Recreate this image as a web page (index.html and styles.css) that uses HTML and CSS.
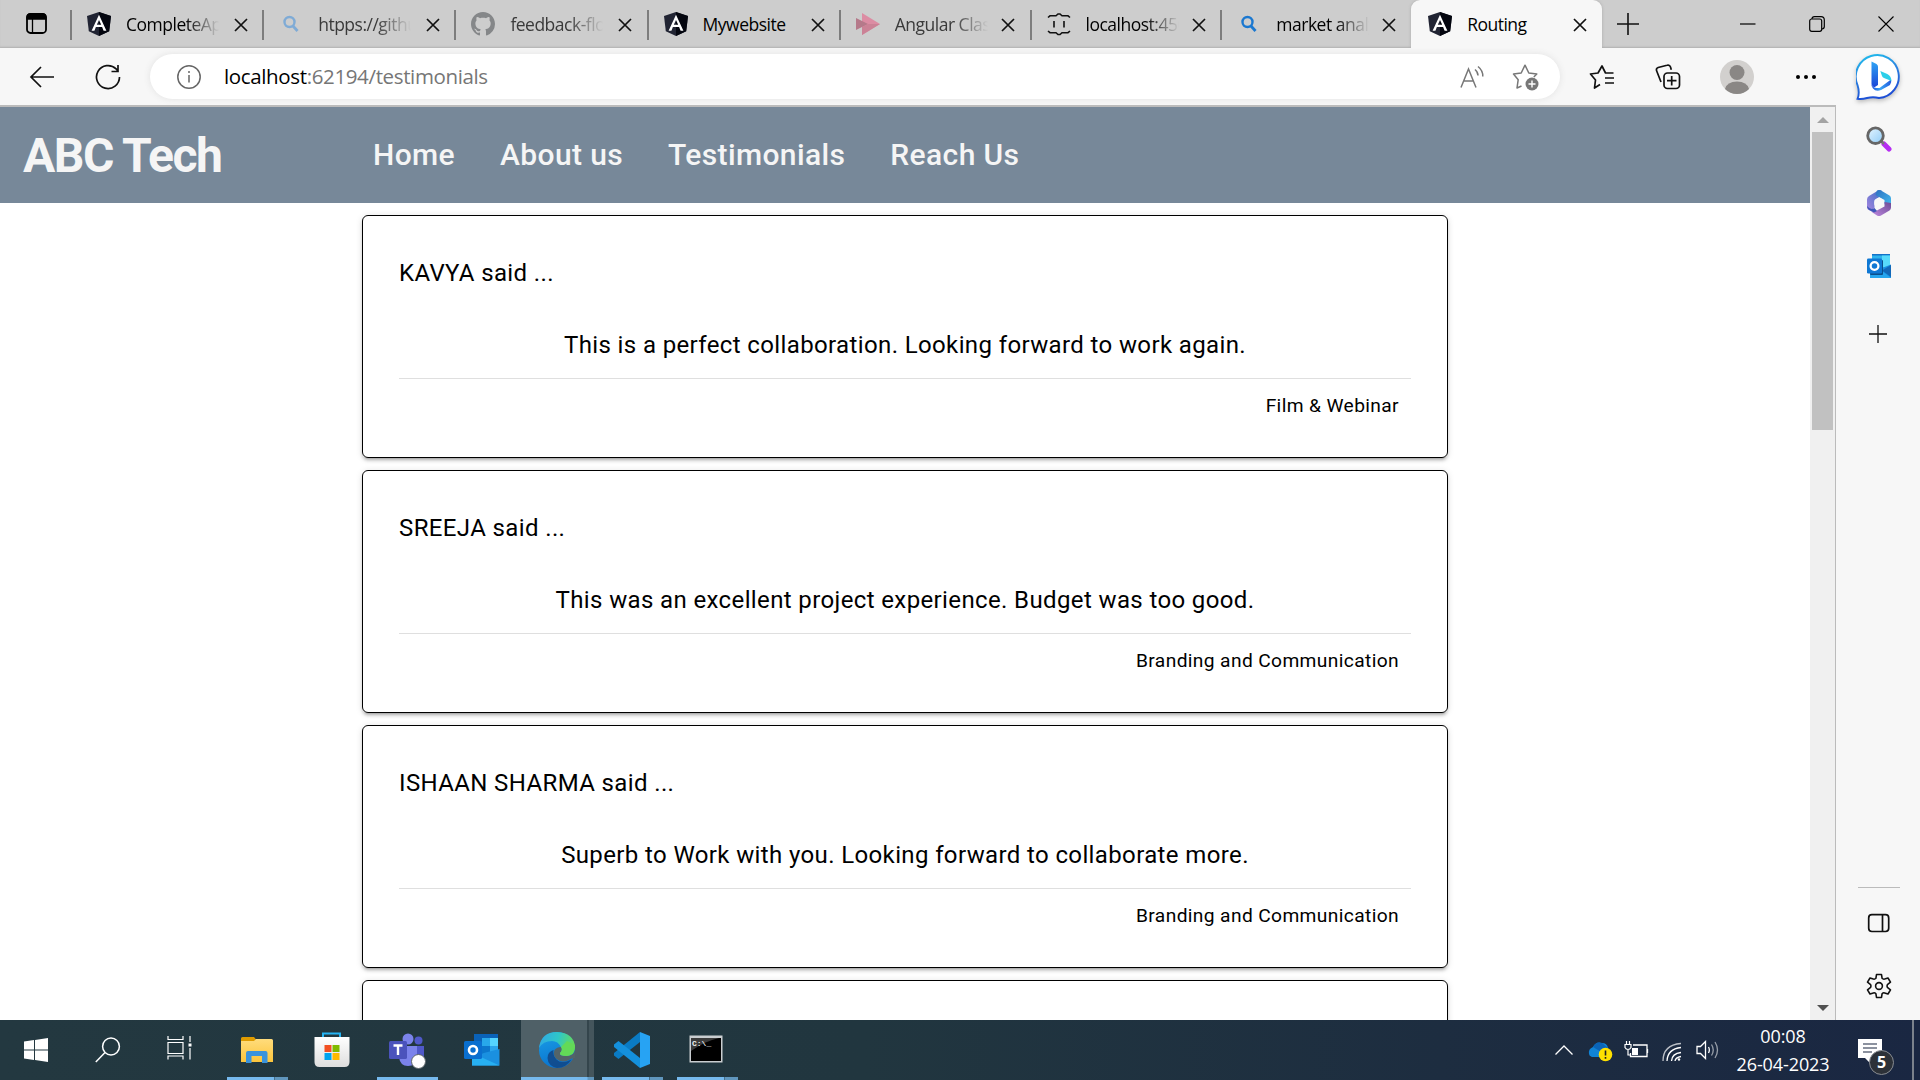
FILE: index.html
```html
<!DOCTYPE html>
<html lang="en">
<head>
<meta charset="utf-8">
<title>Routing</title>
<link rel="stylesheet" href="styles.css">
</head>
<body>
<svg class="defs" aria-hidden="true">
  <defs>
    <linearGradient id="gBingRing" x1="0" y1="0" x2="0.3" y2="1"><stop offset="0" stop-color="#1fc3ee"/><stop offset="0.5" stop-color="#2b83e0"/><stop offset="1" stop-color="#1d4fd6"/></linearGradient>
    <linearGradient id="gBingB" x1="0" y1="0" x2="0" y2="1"><stop offset="0" stop-color="#2fa4f4"/><stop offset="1" stop-color="#1a45d8"/></linearGradient>
    <linearGradient id="gBingTail" x1="0" y1="0" x2="1" y2="0"><stop offset="0" stop-color="#1d50dc"/><stop offset="0.45" stop-color="#39a5f6"/><stop offset="1" stop-color="#2458dc"/></linearGradient>
    <linearGradient id="gEdgeTop" x1="0" y1="0.3" x2="1" y2="0.5"><stop offset="0" stop-color="#2fa9e4"/><stop offset="0.5" stop-color="#2fc6c8"/><stop offset="1" stop-color="#68dc52"/></linearGradient>
    <linearGradient id="gEdgeMid" x1="0" y1="0" x2="0.3" y2="1"><stop offset="0" stop-color="#1ba0e8"/><stop offset="1" stop-color="#0a74cf"/></linearGradient>
    <linearGradient id="gStore" x1="0" y1="0" x2="0" y2="1"><stop offset="0" stop-color="#ffffff"/><stop offset="1" stop-color="#dedede"/></linearGradient>
    <linearGradient id="gFolder" x1="0" y1="0" x2="0" y2="1"><stop offset="0" stop-color="#ffdc7c"/><stop offset="1" stop-color="#fcc53c"/></linearGradient>
    <linearGradient id="gLens" x1="0" y1="0" x2="1" y2="1"><stop offset="0" stop-color="#e6f6ff"/><stop offset="1" stop-color="#8ecbf7"/></linearGradient>
    <linearGradient id="gLoopA" x1="0" y1="1" x2="1" y2="0"><stop offset="0" stop-color="#a585e0"/><stop offset="1" stop-color="#3b6fc4"/></linearGradient>
    <linearGradient id="gLoopB" x1="0" y1="0" x2="1" y2="1"><stop offset="0" stop-color="#2d6fc0"/><stop offset="1" stop-color="#44c0f2"/></linearGradient>
    <linearGradient id="gLoopC" x1="0" y1="1" x2="1" y2="0"><stop offset="0" stop-color="#c08ae0"/><stop offset="1" stop-color="#6c4a96"/></linearGradient>
  </defs>
  <symbol id="angular" viewBox="0 0 24 24">
    <path d="M12 0 24 4 22.2 19.200 12 24 1.800 19.200 0 4z" fill="#212433"/>
    <path d="M12 0 24 4 22.2 19.200 12 24z" fill="#04060f"/>
    <path d="M12 2.700 4.600 18.700h2.800l1.500-3.700h6.200l1.500 3.700h2.800zM12 8l2.200 4.800H9.800z" fill="#fff" fill-rule="evenodd"/>
  </symbol>
  <symbol id="close" viewBox="0 0 14 14"><path d="M1 1 13 13M13 1 1 13" stroke="#111" stroke-width="1.700" fill="none"/></symbol>
  <symbol id="lens" viewBox="0 0 24 24"><circle cx="10.500" cy="10" r="5" fill="none" stroke="currentColor" stroke-width="2.400"/><path d="M14 14l4.500 5" stroke="currentColor" stroke-width="2.800"/></symbol>
  <symbol id="outlook" viewBox="0 0 36 34">
    <path d="M10 1h24v22H10z" fill="#0a62b8"/><path d="M18 5h8v8h-8z" fill="#28a8ea"/><path d="M26 5h8v8h-8z" fill="#55d5ff"/><path d="M18 13h8v7h-8z" fill="#0c77cc"/><path d="M26 13h8v6h-8z" fill="#2ba6ec"/>
    <path d="M8 23 35.500 16v16.500H8z" fill="#1a90e0"/><path d="M8 20l27.500 12.500H8z" fill="#27b0f2"/>
    <rect y="8" width="18" height="18" rx="1.600" fill="#0a6fcf"/><circle cx="9" cy="17" r="4" fill="none" stroke="#fff" stroke-width="2.600"/>
  </symbol>
</svg>

<header class="tabstrip">
  <button class="workspace"><svg width="24" height="28" viewBox="0 0 24 28"><rect x="2" y="4" width="19" height="19" rx="3.500" fill="none" stroke="#000" stroke-width="1.800"/><path d="M2 9V7q0-3 3-3h13q3 0 3 3v2zM7.500 9v14" stroke="#000" stroke-width="1.300"/></svg></button>
  <nav class="tabs">
    <div class="tab"><svg class="fav"><use href="#angular"/></svg><span class="label">CompleteApp</span><svg class="x"><use href="#close"/></svg></div>
    <div class="tab dim"><svg class="fav pale"><use href="#lens"/></svg><span class="label">htpps://github</span><svg class="x"><use href="#close"/></svg></div>
    <div class="tab dim"><svg class="fav" viewBox="0 0 16 16"><path fill="#858789" d="M8 0C3.580 0 0 3.580 0 8c0 3.540 2.290 6.530 5.470 7.590.4.070.55-.17.55-.38 0-.19-.01-.82-.01-1.490-2.010.37-2.530-.49-2.690-.94-.09-.23-.48-.94-.82-1.130-.28-.15-.68-.52-.01-.53.63-.01 1.080.58 1.230.82.72 1.210 1.870.87 2.330.66.07-.52.28-.87.51-1.070-1.780-.2-3.640-.89-3.640-3.950 0-.87.31-1.590.82-2.150-.08-.2-.36-1.020.08-2.120 0 0 .67-.21 2.200.82.64-.18 1.320-.27 2-.27s1.360.09 2 .27c1.530-1.040 2.200-.82 2.200-.82.44 1.100.16 1.920.08 2.120.51.56.82 1.270.82 2.150 0 3.070-1.870 3.750-3.650 3.950.29.25.54.73.54 1.480 0 1.070-.01 1.930-.01 2.200 0 .21.15.46.55.38A8.010 8.010 0 0 0 16 8c0-4.420-3.580-8-8-8z"/></svg><span class="label">feedback-flow</span><svg class="x"><use href="#close"/></svg></div>
    <div class="tab"><svg class="fav"><use href="#angular"/></svg><span class="label">Mywebsite</span><svg class="x"><use href="#close"/></svg></div>
    <div class="tab dim"><svg class="fav" viewBox="0 0 24 24"><path d="M6 1l18 11-18 11z" fill="#dc8ca3"/><path d="M0 6l12 6-12 6z" fill="#b5798a"/><path d="M12 12h12L6 23v-8z" fill="#cb8296"/></svg><span class="label">Angular Class</span><svg class="x"><use href="#close"/></svg></div>
    <div class="tab"><svg class="fav" viewBox="0 0 24 24" fill="none" stroke="#111" stroke-width="1.600"><path d="M1 5.500l2-1.700h6l2-1.800h2l2 1.800h6l2 1.700M1 19l2 1.700h6l2 1.800h2l2-1.800h6l2-1.700M7 9v6.500M17 9v6.500"/></svg><span class="label">localhost:4500</span><svg class="x"><use href="#close"/></svg></div>
    <div class="tab"><svg class="fav blue"><use href="#lens"/></svg><span class="label">market analysis</span><svg class="x"><use href="#close"/></svg></div>
    <div class="tab active"><svg class="fav"><use href="#angular"/></svg><span class="label">Routing</span><svg class="x"><use href="#close"/></svg></div>
  </nav>
  <svg class="newtab" width="22" height="22" viewBox="0 0 22 22"><path d="M11 0v22M0 11h22" stroke="#111" stroke-width="1.600"/></svg>
  <div class="winctl">
    <svg width="16" height="16" viewBox="0 0 16 16"><path d="M0 8h15.500" stroke="#000" stroke-width="1.200"/></svg>
    <svg width="16" height="16" viewBox="0 0 16 16" fill="none" stroke="#000" stroke-width="1.200"><rect x=".7" y="3" width="12" height="12.300" rx="2"/><path d="M3 3q0-2.300 2.500-2.300h6.500q3.300 0 3.300 3.300v6.500q0 2.300-2.300 2.500"/></svg>
    <svg width="16" height="16" viewBox="0 0 16 16"><path d="M.5.5l15 15M15.500.5l-15 15" stroke="#000" stroke-width="1.100"/></svg>
  </div>
</header>

<div class="toolbar">
  <div class="navbtns">
    <svg width="26" height="24" viewBox="0 0 26 24" fill="none" stroke="#111" stroke-width="1.700"><path d="M25 12H2M12 2 2 12l10 10"/></svg>
    <svg width="26" height="26" viewBox="0 0 26 26" fill="none" stroke="#111" stroke-width="1.700"><path d="M24.500 13a11.500 11.500 0 1 1-3.400-8.100L23 7M23 1v6.500h-6.500"/></svg>
  </div>
  <div class="address">
    <svg width="24" height="24" viewBox="0 0 24 24" fill="none" stroke="#666" stroke-width="1.500"><circle cx="12" cy="12" r="11.200"/><path d="M12 10v7.500M12 6v2"/></svg>
    <span class="url"><b>localhost</b>:62194/testimonials</span>
    <svg class="aloud" width="26" height="24" viewBox="0 0 26 24" fill="none" stroke="#777" stroke-width="1.500"><path d="M1 22.500 8.500 4 16 22.500M3.800 16h9.400M15 4.500q3 2.500 3 6M18 1.500q5 4 4.800 10"/></svg>
    <svg width="28" height="28" viewBox="0 0 28 28"><path d="M9.500 23 5 25l1.200-8.300L1.500 11l7.700-1L13 2.200l3.800 7.800 8 1-3 3" fill="none" stroke="#777" stroke-width="1.500" stroke-linejoin="round"/><circle cx="20" cy="21" r="6.500" fill="#777"/><path d="M20 17.500v7M16.500 21h7" stroke="#fff" stroke-width="1.400"/></svg>
  </div>
  <div class="actions">
    <svg width="26" height="26" viewBox="0 0 26 26" fill="none" stroke="#111" stroke-width="1.700" stroke-linejoin="round"><path d="M11 20.500 5.500 24l1-8L1.500 10l7.500-1L13 2l3.500 7h8M16 14h9M16 19h9"/></svg>
    <svg width="26" height="26" viewBox="0 0 26 26" fill="none" stroke="#111" stroke-width="1.700"><rect x="9" y="9" width="15.500" height="15.500" rx="3.500"/><path d="M16.700 12v9.500M12 16.700h9.500M6 18 1.700 7q-1-2.500 1.500-3.500L12 1.200q2.700-.8 3.500 1.800l.8 2.800"/></svg>
    <svg width="34" height="34" viewBox="0 0 34 34"><circle cx="17" cy="17" r="17" fill="#d2d0ce"/><circle cx="17" cy="12.500" r="7.500" fill="#8a8785"/><path d="M5 29q2-7.500 12-7.500T29 29q-5 5-12 5T5 29z" fill="#8a8785"/></svg>
    <svg width="22" height="6" viewBox="0 0 22 6"><circle cx="3" cy="3" r="2"/><circle cx="11" cy="3" r="2"/><circle cx="19" cy="3" r="2"/></svg>
  </div>
  <svg class="bing" width="46" height="48" viewBox="0 0 46 48"><path d="M1.500 45.800Q4 40 1.500 32A21.500 21.500 0 1 1 23 45Q17 43.500 11 45 6 46.500 1.500 45.800z" fill="#fff" stroke="url(#gBingRing)" stroke-width="1.900"/><path d="M15.500 32q0 5 5 5.500h3L35 29q1 3-1 5.500l-9 5q-5 2-8-1.500-2-2.500-1.500-6z" fill="url(#gBingTail)" transform="translate(0 -2.500)"/><path d="M15.500 8.500l5 2.500q1.500 1 1.500 2.500V32l-3.500 2.300q-3-1-3-4.300z" fill="url(#gBingB)"/><path d="M24.300 18l7 3q4 2 4.200 7l-7.500-3q-1.500-.5-2-2z" fill="#2ccfe9"/></svg>
</div>

<div class="main">
  <div class="viewport">
    <div class="page">
      <div class="site-header">
        <h1>ABC Tech</h1>
        <nav class="menu"><a>Home</a><a>About us</a><a>Testimonials</a><a>Reach Us</a></nav>
      </div>
      <main class="cards">
        <article class="card"><p class="who">KAVYA said ...</p><p class="quote">This is a perfect collaboration. Looking forward to work again.</p><p class="service">Film &amp; Webinar</p></article>
        <article class="card"><p class="who">SREEJA said ...</p><p class="quote">This was an excellent project experience. Budget was too good.</p><p class="service">Branding and Communication</p></article>
        <article class="card"><p class="who">ISHAAN SHARMA said ...</p><p class="quote">Superb to Work with you. Looking forward to collaborate more.</p><p class="service">Branding and Communication</p></article>
        <article class="card"></article>
      </main>
    </div>
    <div class="scrollbar">
      <svg width="12" height="6" viewBox="0 0 12 6"><path d="M6 0l6 6H0z" fill="#a3a3a3"/></svg>
      <i class="thumb"></i>
      <svg class="down" width="12" height="6" viewBox="0 0 12 6"><path d="M6 6l6-6H0z" fill="#505050"/></svg>
    </div>
  </div>
  <aside class="sidebar">
    <svg width="26" height="26" viewBox="0 0 26 26"><path d="M18 18l5 5" stroke="#b62df2" stroke-width="5" stroke-linecap="round"/><path d="M15 15l3 3" stroke="#777" stroke-width="2.500"/><circle cx="9.500" cy="9.700" r="7.800" fill="url(#gLens)" stroke="#666" stroke-width="2.800"/></svg>
    <svg class="m365" width="26" height="28" viewBox="0 0 26 28"><path d="M13 1 3 7Q1 8.200 1 10.500V18q0 3 3.500 3.500L8.500 19V11l7-4.500V1.500z" fill="url(#gLoopA)"/><path d="M11 1.500q2-1 4 0l8.500 5Q25 7.500 25 9.500V19l-6.500-4V11L9.500 6z" fill="url(#gLoopB)"/><path d="M25 14v4.500q0 2-1.500 3L15 26.500q-2 1-4 0L5 22.500l5-.5 8.500-4.500V13z" fill="url(#gLoopC)"/><path d="M1 17q0 2.500 2 4l5 2.500 3-1.500-2.500-3q-4 2.500-7.500-2z" fill="#3f55b8"/><circle cx="13" cy="14" r="4.900" fill="#f7f7f7"/></svg>
    <svg class="mail" width="24" height="24" viewBox="0 0 24 24"><path d="M5 0h18v12H5z" fill="#1473c8"/><path d="M5 1.500h18V14H5z" fill="#2fb4ee"/><path d="M15 1.500h8V13h-8z" fill="#57dafb"/><path d="M3 14h12l9-3.500V24H3z" fill="#1a8fe0"/><path d="M15 16.500 24 11v12z" fill="#1268b8"/><path d="M3 20l12-3 9 7H3z" fill="#25a5ee"/><rect x="3" y="6" width="13" height="15" rx="1" fill="#0a4f8c"/><rect y="4.500" width="15" height="15" rx="1.300" fill="#0f78d4"/><circle cx="7.500" cy="12" r="3.900" fill="none" stroke="#fff" stroke-width="2.300"/></svg>
    <svg class="add" width="20" height="20" viewBox="0 0 20 20"><path d="M10 1v18M1 10h18" stroke="#111" stroke-width="1.300"/></svg>
    <div class="bottom">
      <svg width="24" height="20" viewBox="0 0 24 20" fill="none" stroke="#111" stroke-width="1.700"><rect x="1.700" y="1.700" width="20" height="16.800" rx="3.200"/><path d="M15.500 2v16.500"/></svg>
      <svg class="gear" width="26" height="26" viewBox="-13 -13 26 26" fill="none" stroke="#111" stroke-width="1.600" stroke-linejoin="round"><path d="M-3.100-7.700-2.500-11.500H2.500L3.100-7.700Q4.200-6.500 5.600-6.900L9-8l2.500 4.200L8.400-1.400Q7.600 0 8.400 1.400L11.500 3.800 9 8 5.600 6.900Q4.200 6.500 3.100 7.700L2.500 11.500H-2.500L-3.100 7.700Q-4.200 6.500-5.600 6.900L-9 8-11.500 3.800-8.400 1.400Q-7.600 0-8.400-1.400L-11.500-3.800-9-8-5.600-6.900Q-4.200-6.500-3.100-7.700z"/><circle r="3.400"/></svg>
    </div>
  </aside>
</div>

<footer class="taskbar">
  <div class="app start"><svg width="24" height="24" viewBox="0 0 24 24" fill="#fff"><path d="M0 3.500l10-1.400v9.300H0zM11 2l13-2v11.400H11zM0 12.500h10v9.400L0 20.500zM11 12.500h13V24l-13-2z"/></svg></div>
  <div class="app search"><svg width="26" height="26" viewBox="0 0 26 26" fill="none" stroke="#fff" stroke-width="1.500"><circle cx="16" cy="9.500" r="8.400"/><path d="M10 15.500.8 25"/></svg></div>
  <div class="app view"><svg width="26" height="24" viewBox="0 0 26 24" fill="none" stroke="#fff" stroke-width="1.200"><path d="M1 0v3.500h15V0M1 23.500V20h15v3.500M1 6.500h15v11H1zM23 0v6M23 12v11.500"/><path d="M21.500 7.500h3v3h-3z" fill="#fff" stroke="none"/></svg></div>
  <div class="app run double folder"><svg width="34" height="28" viewBox="0 0 34 28"><path d="M1 2.500Q1 1 2.500 1H14l2 2.500L14 7H1z" fill="#df9b00"/><path d="M1 5h13l2-2h15.500Q33 3 33 4.500V26H1z" fill="url(#gFolder)"/><path d="M6 27V17q0-2 2-2h17.500q2 0 2 2v10H22v-7H11.500v7z" fill="#3a93dc"/></svg></div>
  <div class="app store"><svg width="36" height="36" viewBox="0 0 36 36"><path d="M9 8V1.500h17V8" fill="none" stroke="#25b4f4" stroke-width="2"/><path d="M.5 5h35v25q0 5-5 5h-25q-5 0-5-5z" fill="url(#gStore)"/><path d="M10.500 13h7v7h-7z" fill="#f25022"/><path d="M18.500 13h7v7h-7z" fill="#7fba00"/><path d="M10.500 21h7v7h-7z" fill="#00a4ef"/><path d="M18.500 21h7v7h-7z" fill="#ffb900"/></svg></div>
  <div class="app run teams"><svg width="38" height="36" viewBox="0 0 38 36"><circle cx="19" cy="6" r="5.500" fill="#7b83eb"/><circle cx="29.500" cy="7.500" r="4" fill="#5059c9"/><path d="M24 13h11v10q-2 6-8 6z" fill="#5059c9"/><path d="M10 13h18v11q-1 9-9 9t-9-9z" fill="#7b83eb"/><rect y="8" width="18" height="18" rx="1.600" fill="#4b53bc"/><path d="M4.500 12.500h9M9 12.500v9.500" stroke="#fff" stroke-width="2.400"/><circle cx="29.500" cy="28.500" r="7" fill="#fff" stroke="#5b6468"/></svg></div>
  <div class="app mailapp"><svg width="36" height="34"><use href="#outlook"/></svg></div>
  <div class="app run double edge"><svg width="36" height="36" viewBox="0 0 36 36"><circle cx="18" cy="18" r="18" fill="url(#gEdgeMid)"/><path d="M0 16Q2 0 18 0q17 1 18 15 0 9-9 9-7 0-6-3 3-3 1-6-3-6-9-6Q4 9 0 16z" fill="url(#gEdgeTop)"/><path d="M14.500 18q-1 5 3 9.500 5 5 15 0Q27 36 18 36q-9-2-9.500-10 0-6 6-8z" fill="#114a8b" opacity=".92"/><path d="M21 21q3-3 1-6-4 0-6.500 3-2 5 2 9 6 5 15.500-.5L36 26V18q-1 6-9 6-7 0-6-3z" fill="#536469"/><path d="M36 13q0 10-8 11-8 0-7-3 3-3 1-6l6-6z" fill="#63da57"/></svg></div>
  <div class="app run double code"><svg width="36" height="36" viewBox="0 0 36 36"><path d="M26 0v10L4.500 27 0 23.500V21z" fill="#0a7bc4"/><path d="M26 36V26L4.500 9 0 12.500V15z" fill="#1490dc"/><path d="M26 0l10 4v28l-10 4z" fill="#27a3f3"/></svg></div>
  <div class="app run double cmd"><svg width="34" height="28" viewBox="0 0 34 28"><rect x=".5" y=".5" width="33" height="27" fill="#c9cdd0"/><path d="M2 3h30v23H2z" fill="#000"/><path d="M2 3h28Q16 6 2 16z" fill="#3b3b3b"/><text x="3" y="10.500" class="prompt">C:\_</text></svg></div>

  <div class="tray">
    <svg width="18" height="10" viewBox="0 0 18 10"><path d="M.5 9.500 9 1l8.500 8.500" fill="none" stroke="#fff" stroke-width="1.300"/></svg>
    <svg class="drive" width="26" height="22" viewBox="0 0 26 22"><path d="M1 14q-1-5 4-7 3-6 9-4 5 0 6 5l-2 9H4q-3-1-3-3z" fill="#1083d6"/><path d="M5 7q3-6 9-4l6 5-5 5z" fill="#0a64b8"/><circle cx="17.500" cy="14.500" r="6.800" fill="#ffe100"/><path d="M17.500 10.500v5M17.500 17v1.700" stroke="#222" stroke-width="1.600"/></svg>
    <svg class="batt" width="26" height="18" viewBox="0 0 26 18"><path d="M9 4h14v11.500H6.500V12M23.500 8v4" fill="none" stroke="#fff" stroke-width="1.300"/><path d="M8 7h6v7H8z" fill="#fff"/><path d="M2.500 0v3M5.500 0v3M1 3.500h6v3q-1 2-3 2t-3-2zM4 8v6h3" fill="none" stroke="#fff" stroke-width="1.200"/></svg>
    <svg class="wifi" width="20" height="20" viewBox="0 0 20 20" fill="none" stroke="#fff" stroke-width="1.300"><path d="M1 19Q1 3 19 1.500" opacity=".7"/><path d="M5 19Q5.500 7 19 5.500M9.500 19q.5-7.500 9.500-8.500M13 19q.5-3.500 6-4.500"/><circle cx="17" cy="17.500" r="1.200" fill="#fff" stroke="none"/></svg>
    <svg class="sound" width="24" height="20" viewBox="0 0 24 20" fill="none" stroke="#fff" stroke-width="1.300"><path d="M1 6.500h3.500L9.500 1.500v17l-5-5H1zM12.500 7q1.700 3 0 6"/><path d="M15.500 4.500q3.500 5.500 0 11M19 2q5 8 0 16" opacity=".55"/></svg>
    <div class="clock"><span>00:08</span><span>26-04-2023</span></div>
    <div class="notes"><svg width="24" height="24" viewBox="0 0 24 24"><path d="M0 0h24v19h-12v5l-5-5H0z" fill="#fff"/><path d="M5 5h14M5 9h14M5 13h9" stroke="#1a2740" stroke-width="1.200"/></svg><span class="badge">5</span></div>
    <i class="peek"></i>
  </div>
</footer>
</body>
</html>
```
FILE: styles.css
```css
* { box-sizing: border-box; margin: 0; padding: 0; }
body { width: 1920px; height: 1080px; overflow: hidden; display: flex; flex-direction: column; background: #fff; font-family: "Open Sans", sans-serif; }
svg { display: block; flex: none; }
.defs { width: 0; height: 0; position: absolute; }

/* Tab strip */
.tabstrip { height: 48px; flex: none; background: #cdcdcd; display: flex; align-items: center; box-shadow: inset 0 -2px 2px -1px #b0b0b0; }
.workspace { width: 70px; padding-left: 25px; border: 0; background: none; }
.tabs { display: flex; width: 1532px; height: 48px; }
.tab { width: 192.200px; flex: none; display: flex; align-items: center; }
.tab:nth-child(n+5) { width: 190.800px; }
.tab::before { content: ""; width: 2px; height: 30px; background: #7d7d7d; margin: 2px 15px 0 0; }
.tab.active { background: #f7f7f7; border-radius: 9px 9px 0 0; box-shadow: 0 0 3px #aaa; clip-path: inset(0 -4px 0 -4px); }
.tab.active::before { background: none; }
.fav { width: 24px; height: 24px; }
.pale { color: #7fabd6; }
.blue { color: #1b78d0; }
.label { width: 95px; margin: -1px 13px 0 15px; font-size: 17.500px; letter-spacing: -0.500px; line-height: 26px; white-space: nowrap; overflow: hidden; color: #000; -webkit-mask-image: linear-gradient(90deg, #000 62%, transparent 98%); mask-image: linear-gradient(90deg, #000 62%, transparent 98%); }
.tab:nth-child(n+5) .label { margin-right: 11px; }
.dim .label { color: #3a3a3a; }
.tab:nth-child(4) .label, .active .label { -webkit-mask-image: none; mask-image: none; }
.x { width: 14px; height: 14px; margin-top: 2px; }
.newtab { margin-left: 15px; }
.winctl { margin: 0 26px 0 auto; display: flex; gap: 53px; }

/* Toolbar */
.toolbar { height: 57px; flex: none; background: #f7f7f7; display: flex; align-items: center; }
.navbtns { width: 150px; display: flex; align-items: center; gap: 40px; padding-left: 29px; }
.address { width: 1410px; height: 45px; background: #fff; border-radius: 23px; box-shadow: 0 0 7px #e2e2e2; display: flex; align-items: center; padding: 0 20px 0 27px; }
.url { flex: 1; margin: -2px 0 0 23px; font-size: 20.500px; letter-spacing: -0.360px; color: #767676; }
.url b { font-weight: 400; color: #000; }
.aloud { margin-right: 26px; }
.actions { flex: 1; display: flex; align-items: center; padding-left: 29px; }
.actions svg:nth-child(2) { margin: 0 39px 0 40px; }
.actions svg:nth-child(4) { margin-left: 41px; }
.bing { margin: 0 18px 0 0; filter: drop-shadow(0 2px 2px #bbb); }

/* Browser content */
.main { flex: 1; min-height: 0; display: flex; }
.viewport { flex: 1; border-top: 2px solid #bbb; border-right: 1px solid #bbb; display: flex; min-width: 0; }
.page { width: 1810px; overflow: hidden; font-family: Roboto, sans-serif; }
.site-header { height: 96px; background: #789; color: #f5f5f5; display: flex; align-items: center; }
h1 { width: 373px; padding: 2px 0 0 23px; font-size: 48px; font-weight: 700; letter-spacing: -1.500px; line-height: 56px; }
.menu { display: flex; gap: 45px; font-size: 30px; font-weight: 500; letter-spacing: 0.375px; line-height: 48px; }
.cards { display: flex; flex-direction: column; gap: 12px; align-items: center; padding-top: 12px; }
.card { width: 1086px; height: 243px; flex: none; border: 1px solid #000; border-radius: 6px; padding: 39px 36px 33px; box-shadow: 0 4px 2px -3px rgba(0,0,0,.2), 0 3px 3px rgba(0,0,0,.14), 0 1px 7px rgba(0,0,0,.12); font-size: 24px; letter-spacing: 0.375px; line-height: 36px; color: #000; }
.quote { margin-top: 36px; height: 52px; text-align: center; border-bottom: 1px solid #dfdfdf; }
.service { padding: 9px 12px 0; text-align: right; font-size: 19.200px; }
.scrollbar { flex: 1; background: #f0f0f0; display: flex; flex-direction: column; align-items: center; padding: 10px 0 9px; }
.thumb { width: 21px; height: 298px; margin-top: 9px; background: #c1c1c1; }
.down { margin-top: auto; }

/* Edge sidebar */
.sidebar { width: 84px; background: #f7f7f7; display: flex; flex-direction: column; align-items: center; padding: 21px 0 0 1px; }
.m365 { margin-top: 37px; }
.mail { margin-top: 37px; }
.add { margin: 46px 2px 0 0; }
.bottom { margin-top: auto; width: 42px; height: 133px; border-top: 1px solid #bbb; display: flex; flex-direction: column; align-items: center; padding-top: 25px; }
.gear { margin-top: 40px; }

/* Taskbar */
.taskbar { height: 60px; flex: none; display: flex; background: linear-gradient(90deg, #233840 0, #21363f 45%, #1d2d40 75%, #1a2742 100%); }
.app { height: 60px; display: flex; align-items: center; padding-bottom: 2px; }
.run { border-bottom: 3px solid #76b9ed; padding-bottom: 0; }
.double { border-image: linear-gradient(90deg, #76b9ed 47px, #2d4a5c 47px, #6096bd 48px) 0 0 3 0; }
.start { width: 95px; padding-left: 24px; padding-bottom: 0; }
.search { width: 72px; padding-left: 0; padding-bottom: 0; }
.view { width: 60px; padding-bottom: 4px; }
.folder { width: 61px; padding: 3px 0 0 13px; }
.store { width: 89px; padding-left: 26px; padding-bottom: 0; }
.teams { width: 61px; padding: 4px 0 0 12px; }
.mailapp { width: 83px; padding-left: 26px; padding-bottom: 0; }
.edge { width: 73px; padding: 3px 0 0 18px; margin-right: 8px; background: linear-gradient(90deg, #4f6067 66px, #34454c 66px, #34454c 68px, #44555c 68px); border-image: linear-gradient(90deg, #76b9ed 66px, #6096bd 67px) 0 0 3 0; }
.code { width: 61px; padding: 3px 0 0 12px; }
.cmd { width: 61px; padding-left: 12px; margin-left: 14px; }
.prompt { font: 700 8px "Liberation Mono", monospace; fill: #eee; }
.tray { margin-left: auto; height: 60px; display: flex; align-items: center; color: #fff; }
.drive { margin: 2px 0 0 15px; }
.batt { margin-left: 10px; }
.wifi { margin: 3px 0 0 12px; }
.sound { margin-left: 14px; }
.clock { width: 94px; margin-left: 16px; display: flex; flex-direction: column; align-items: center; font-size: 18px; letter-spacing: -0.100px; line-height: 28px; white-space: nowrap; }
.notes { position: relative; margin: 2px 30px 0 28px; }
.badge { position: absolute; left: 11px; top: 11px; width: 25px; height: 25px; border: 1px solid #888c92; border-radius: 50%; background: #2c3138; font-size: 16px; font-weight: 700; line-height: 23px; text-align: center; }
.peek { width: 2px; height: 60px; margin-right: 6px; background: #7b828c; }
```
